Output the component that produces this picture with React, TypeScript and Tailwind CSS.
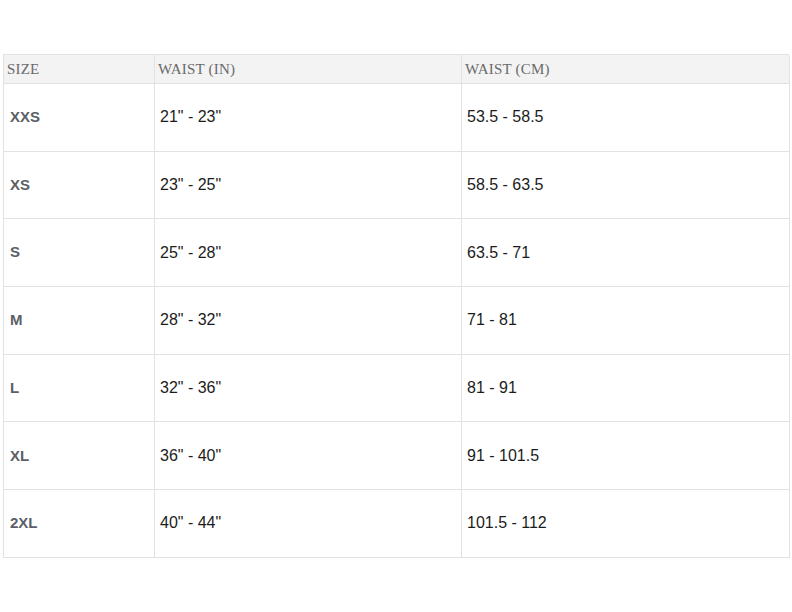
// Size chart: waist measurements per size.
const ROWS = [
  { size: 'XXS', inches: '21" - 23"', cm: '53.5 - 58.5' },
  { size: 'XS', inches: '23" - 25"', cm: '58.5 - 63.5' },
  { size: 'S', inches: '25" - 28"', cm: '63.5 - 71' },
  { size: 'M', inches: '28" - 32"', cm: '71 - 81' },
  { size: 'L', inches: '32" - 36"', cm: '81 - 91' },
  { size: 'XL', inches: '36" - 40"', cm: '91 - 101.5' },
  { size: '2XL', inches: '40" - 44"', cm: '101.5 - 112' },
];

const HEADERS = ['Size', 'Waist (in)', 'Waist (cm)'];

export default function App() {
  return (
    <div className="w-[792px] h-[612px] bg-white pt-[54px] pl-[3px]">
      <div className="grid grid-cols-[151px_307px_328px] w-[786px] border-t border-l border-[#e2e2e2]">
        {HEADERS.map((h) => (
          <div
            key={h}
            className="h-[29px] flex items-center pl-[3px] bg-[#f3f3f3] border-r border-b border-[#e2e2e2] uppercase text-[15px] tracking-[0.2px] text-[#6a6a6a] font-['Liberation_Serif',serif]"
          >
            {h}
          </div>
        ))}
        {ROWS.map((row) => (
          <div key={row.size} className="contents">
            <div className="h-[67.7px] flex items-center pl-[6px] border-r border-b border-[#e2e2e2] text-[15px] font-bold text-[#5c5f67] font-['Liberation_Sans',sans-serif]">
              {row.size}
            </div>
            <div className="h-[67.7px] flex items-center pl-[5px] border-r border-b border-[#e2e2e2] text-[16px] text-[#1c1c1c] font-['Liberation_Sans',sans-serif]">
              {row.inches}
            </div>
            <div className="h-[67.7px] flex items-center pl-[5px] border-r border-b border-[#e2e2e2] text-[16px] text-[#1c1c1c] font-['Liberation_Sans',sans-serif]">
              {row.cm}
            </div>
          </div>
        ))}
      </div>
    </div>
  );
}
